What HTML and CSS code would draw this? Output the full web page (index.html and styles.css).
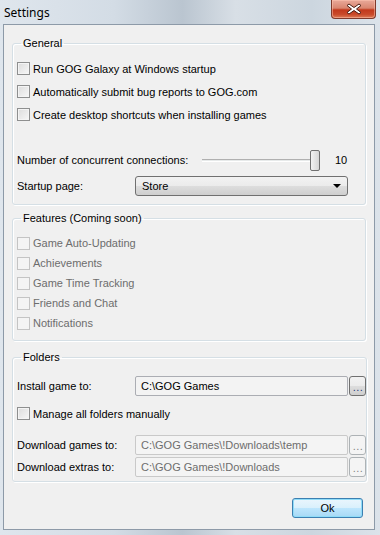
FILE: index.html
```html
<!DOCTYPE html>
<html lang="en">
<head>
  <meta charset="UTF-8">
  <title>Settings</title>
  <link rel="stylesheet" href="styles.css">
</head>
<body>
  <div class="window">
    <div class="titlebar">
      <span class="title">Settings</span>
      <div class="close">
        <svg width="16" height="12" viewBox="0 0 16 12">
          <path d="M3 1 L8 4.5 L13 1 L15 2.5 L10.5 6 L15 9.5 L13 11 L8 7.5 L3 11 L1 9.5 L5.5 6 L1 2.5 Z" fill="#fff" stroke="#4a1e14" stroke-width="1" stroke-linejoin="round"/>
        </svg>
      </div>
    </div>

    <div class="client">
      <!-- General -->
      <fieldset class="group general">
        <legend>General</legend>
        <label class="check"><span class="box"></span>Run GOG Galaxy at Windows startup</label>
        <label class="check"><span class="box"></span>Automatically submit bug reports to GOG.com</label>
        <label class="check"><span class="box"></span>Create desktop shortcuts when installing games</label>

        <div class="row slider-row">
          <span class="label wide">Number of concurrent connections:</span>
          <div class="slider"><div class="thumb"></div></div>
          <span class="value">10</span>
        </div>
        <div class="row combo-row">
          <span class="label">Startup page:</span>
          <div class="combo">
            <span>Store</span>
            <span class="arrow"></span>
          </div>
        </div>
      </fieldset>

      <!-- Features -->
      <fieldset class="group features">
        <legend>Features (Coming soon)</legend>
        <label class="check disabled"><span class="box"></span>Game Auto-Updating</label>
        <label class="check disabled"><span class="box"></span>Achievements</label>
        <label class="check disabled"><span class="box"></span>Game Time Tracking</label>
        <label class="check disabled"><span class="box"></span>Friends and Chat</label>
        <label class="check disabled"><span class="box"></span>Notifications</label>
      </fieldset>

      <!-- Folders -->
      <fieldset class="group folders">
        <legend>Folders</legend>
        <div class="row path-row install">
          <span class="label">Install game to:</span>
          <div class="textbox">C:\GOG Games</div>
          <div class="browse">...</div>
        </div>
        <label class="check manage"><span class="box"></span>Manage all folders manually</label>
        <div class="row path-row dl-first">
          <span class="label">Download games to:</span>
          <div class="textbox disabled">C:\GOG Games\!Downloads\temp</div>
          <div class="browse disabled">...</div>
        </div>
        <div class="row path-row dl-second">
          <span class="label">Download extras to:</span>
          <div class="textbox disabled">C:\GOG Games\!Downloads</div>
          <div class="browse disabled">...</div>
        </div>
      </fieldset>

      <div class="footer">
        <div class="ok">Ok</div>
      </div>
    </div>
  </div>
</body>
</html>
```

FILE: styles.css
```css
html, body {
  margin: 0;
  padding: 0;
}

body {
  width: 380px;
  height: 535px;
  overflow: hidden;
  font-family: 'Liberation Sans', sans-serif;
  font-size: 11px;
  color: #000;
}

.window {
  height: 535px;
  display: flex;
  flex-direction: column;
  background: linear-gradient(90deg, #dfe6ed 0%, #d3dce5 30%, #bac5d0 48%, #d8dfe6 62%, #ccd6df 82%, #dce3ea 100%);
  padding: 0 5px 5px 3px;
  box-sizing: border-box;
}

.titlebar {
  height: 24px;
  display: flex;
  align-items: flex-start;
  justify-content: space-between;
  flex-shrink: 0;
}

.title {
  font-family: 'Noto Sans', sans-serif;
  font-size: 12px;
  margin: 4px 0 0 1px;
  color: #000;
}

.close {
  width: 45px;
  height: 19px;
  margin-right: -1px;
  border: 1px solid #7e3a2c;
  border-top: none;
  border-radius: 0 0 4px 4px;
  box-sizing: border-box;
  background: linear-gradient(180deg, #e9a99a 0%, #d98670 45%, #c2391c 55%, #c94a2a 80%, #dd7a55 100%);
  box-shadow: inset 0 0 0 1px rgba(255, 200, 180, 0.5);
  display: flex;
  align-items: center;
  justify-content: center;
}

.client {
  flex: 1;
  background: #f0f0f0;
  border: 1px solid #8d9aa8;
  padding: 12px 8px 0 8px;
  display: flex;
  flex-direction: column;
}

/* group boxes */
.group {
  margin: 0;
  border: 1px solid #d5dfe5;
  border-radius: 3px;
  padding: 7px 0 0 4px;
  box-shadow: inset 1px 1px 0 #fff, 1px 1px 0 #fff;
}

.group legend {
  padding: 0 2px;
  margin-left: 4px;
  line-height: 13px;
}

.general {
  height: 168px;
  box-sizing: border-box;
}

.features {
  margin-top: 7px;
  height: 129px;
  box-sizing: border-box;
  padding-top: 8px;
}

.folders {
  margin-top: 10px;
  height: 131px;
  box-sizing: border-box;
  padding-top: 8px;
}

/* checkboxes */
.check {
  display: flex;
  align-items: center;
  height: 23px;
}

.features .check {
  height: 20px;
}

.box {
  width: 13px;
  height: 13px;
  box-sizing: border-box;
  border: 1px solid #8e8f8f;
  background: linear-gradient(135deg, #dcdcdc, #f7f7f7);
  box-shadow: inset 0 0 0 1px #f4f4f4;
  margin-right: 3px;
  flex-shrink: 0;
}

.check.disabled {
  color: #6d6d6d;
}

.check.disabled .box {
  border-color: #c4c4c4;
  background: #f4f4f4;
  box-shadow: none;
}

/* label + control rows */
.row {
  display: flex;
  align-items: center;
}

.label {
  width: 118px;
  flex-shrink: 0;
}

.label.wide {
  width: 185px;
}

.slider-row {
  margin-top: 23px;
  height: 22px;
}

.slider {
  width: 118px;
  height: 21px;
  display: flex;
  justify-content: flex-end;
  background: linear-gradient(180deg, transparent 9px, #b0b0b0 9px, #b0b0b0 10px, #e7eaea 10px, #e7eaea 11px, #fff 11px, #fff 12px, transparent 12px);
}

.thumb {
  width: 10px;
  height: 21px;
  box-sizing: border-box;
  border: 1px solid #707070;
  border-radius: 2px;
  background: linear-gradient(90deg, #f2f2f2, #e4e4e4 50%, #d6d6d6);
}

.value {
  margin-left: 15px;
}

.combo-row {
  margin-top: 5px;
}

.combo {
  width: 213px;
  height: 20px;
  box-sizing: border-box;
  border: 1px solid #707070;
  border-radius: 3px;
  background: linear-gradient(180deg, #f2f2f2 0%, #ebebeb 50%, #dddddd 50%, #cfcfcf 100%);
  display: flex;
  align-items: center;
  justify-content: space-between;
  padding: 0 6px 0 6px;
}

.arrow {
  width: 0;
  height: 0;
  border-left: 4px solid transparent;
  border-right: 4px solid transparent;
  border-top: 4px solid #000;
}

/* folder rows */
.path-row {
  height: 21px;
}

.install {
  margin-top: 3px;
}

.textbox {
  width: 213px;
  height: 20px;
  box-sizing: border-box;
  border: 1px solid #abadb3;
  border-radius: 2px;
  background: #f3f3f3;
  padding-left: 5px;
  display: flex;
  align-items: center;
}

.textbox.disabled {
  border-color: #c9c9c9;
  background: #f4f4f4;
  color: #6d6d6d;
}

.browse {
  width: 17px;
  height: 20px;
  margin-left: 1px;
  box-sizing: border-box;
  border: 1px solid #707070;
  border-radius: 3px;
  background: linear-gradient(180deg, #f2f2f2 0%, #ebebeb 50%, #dddddd 50%, #cfcfcf 100%);
  text-align: center;
  line-height: 20px;
  font-size: 11px;
  color: #1f3a7a;
  letter-spacing: 0.5px;
  padding-left: 1px;
}

.browse.disabled {
  border-color: #adb2b5;
  background: #f4f4f4;
  color: #838383;
}

.manage {
  margin-top: 6px;
}

.dl-first {
  margin-top: 9px;
}

.dl-second {
  margin-top: 1px;
}

.footer {
  display: flex;
  justify-content: flex-end;
  padding: 16px 3px 0 0;
}

.ok {
  width: 71px;
  height: 20px;
  box-sizing: border-box;
  border: 1px solid #3c7fb1;
  border-radius: 3px;
  background: linear-gradient(180deg, #eaf6fd 0%, #d9f0fc 50%, #bee6fd 50%, #a7d9f5 100%);
  box-shadow: inset 0 0 0 1px #8fdcf8;
  text-align: center;
  line-height: 18px;
}
```
